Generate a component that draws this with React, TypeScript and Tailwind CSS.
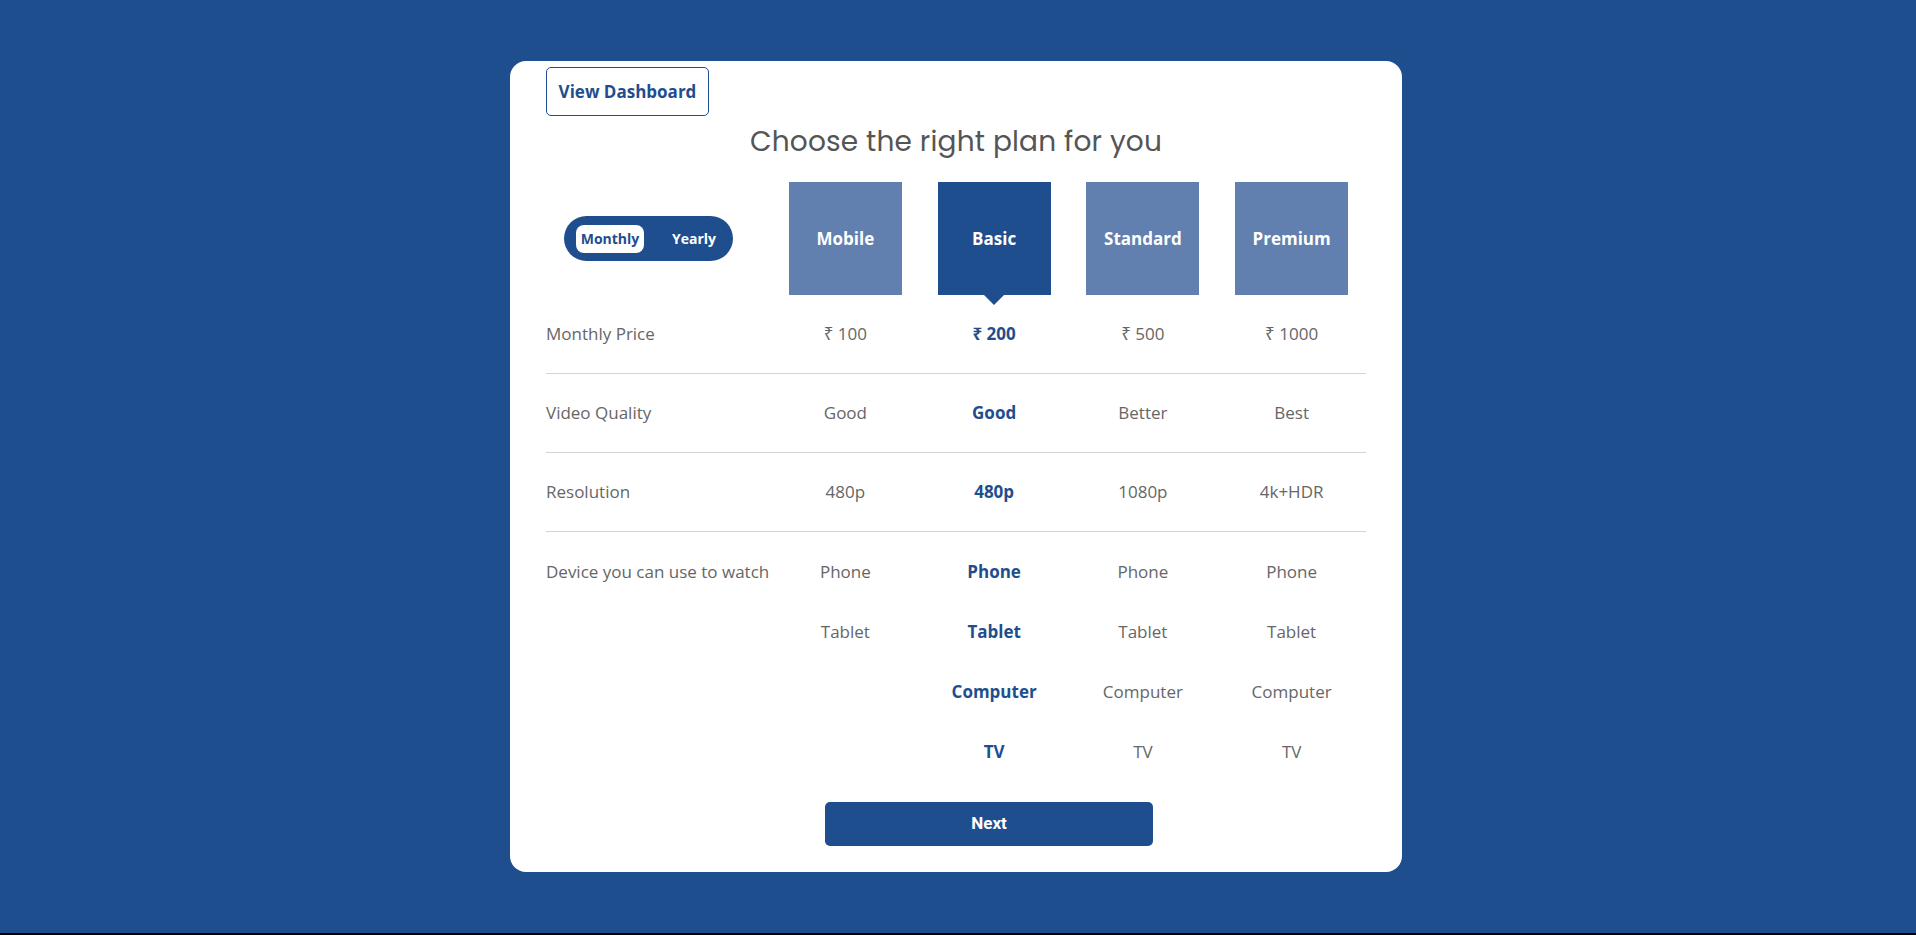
import React, { useState } from 'react';

type Plan = {
  name: string;
  price: string;
  quality: string;
  resolution: string;
  devices: string[];
};

const plans: Plan[] = [
  { name: 'Mobile', price: '₹ 100', quality: 'Good', resolution: '480p', devices: ['Phone', 'Tablet'] },
  { name: 'Basic', price: '₹ 200', quality: 'Good', resolution: '480p', devices: ['Phone', 'Tablet', 'Computer', 'TV'] },
  { name: 'Standard', price: '₹ 500', quality: 'Better', resolution: '1080p', devices: ['Phone', 'Tablet', 'Computer', 'TV'] },
  { name: 'Premium', price: '₹ 1000', quality: 'Best', resolution: '4k+HDR', devices: ['Phone', 'Tablet', 'Computer', 'TV'] },
];

const bodyFont = { fontFamily: '"Open Sans", "Noto Sans", sans-serif' };

export default function App() {
  const [selected, setSelected] = useState('Basic');
  const [yearly, setYearly] = useState(false);

  const cellClass = (name: string) =>
    name === selected ? 'text-[#1f4e8e] font-bold' : 'text-[#666666]';

  const rows: { label: string; key: 'price' | 'quality' | 'resolution' }[] = [
    { label: 'Monthly Price', key: 'price' },
    { label: 'Video Quality', key: 'quality' },
    { label: 'Resolution', key: 'resolution' },
  ];

  return (
    <div style={bodyFont}>
      <div className="h-[933px] bg-[#1f4e8e] flex items-center justify-center pr-[4px]">
        <div className="w-[892px] h-[811px] bg-white rounded-2xl px-9 pt-[6px]">
          {/* Header */}
          <button className="h-[49px] w-[163px] border border-[#1f4e8e] rounded-[5px] text-[#1f4e8e] font-bold text-[17px]">
            View Dashboard
          </button>
          <h1
            className="text-center text-[#555555] text-[28px] leading-[40px] mt-[6px] tracking-[0.2px]"
            style={{ fontFamily: 'Poppins, Inter, sans-serif' }}
          >
            Choose the right plan for you
          </h1>

          {/* Plan header row */}
          <div className="grid grid-cols-[225px_repeat(4,1fr)] mt-[20px]">
            <div className="flex items-center pl-[18px]">
              <div className="flex items-center h-[45px] w-[169px] rounded-full bg-[#1f4e8e] pl-[12px] pr-[5px] text-[14px] font-bold">
                <button
                  onClick={() => setYearly(false)}
                  className={`h-[28px] w-[68px] rounded-[8px] ${!yearly ? 'bg-white text-[#1f4e8e]' : 'text-white'}`}
                >
                  Monthly
                </button>
                <button
                  onClick={() => setYearly(true)}
                  className={`h-[28px] w-[68px] ml-auto rounded-[8px] ${yearly ? 'bg-white text-[#1f4e8e]' : 'text-white'}`}
                >
                  Yearly
                </button>
              </div>
            </div>
            {plans.map((p) => (
              <div key={p.name} className="flex justify-center">
                <button
                  onClick={() => setSelected(p.name)}
                  className={`relative w-[113px] h-[113px] flex items-center justify-center text-white font-bold text-[17px] ${
                    p.name === selected ? 'bg-[#1f4e8e]' : 'bg-[#6180b0]'
                  }`}
                >
                  {p.name}
                  {p.name === selected && (
                    <span className="absolute left-1/2 -translate-x-1/2 top-full w-0 h-0 border-l-[10px] border-r-[10px] border-t-[10px] border-l-transparent border-r-transparent border-t-[#1f4e8e]" />
                  )}
                </button>
              </div>
            ))}
          </div>

          {/* Feature rows */}
          {rows.map((r) => (
            <div
              key={r.label}
              className="grid grid-cols-[225px_repeat(4,1fr)] h-[79px] items-center border-b border-[#d4d4d4] text-[17px]"
            >
              <div className="text-[#666666]">{r.label}</div>
              {plans.map((p) => (
                <div key={p.name} className={`text-center ${cellClass(p.name)}`}>
                  {p[r.key]}
                </div>
              ))}
            </div>
          ))}

          <div className="grid grid-cols-[225px_repeat(4,1fr)] pt-[10px] text-[17px]">
            <div className="h-[60px] flex items-center text-[#666666] whitespace-nowrap">Device you can use to watch</div>
            {plans.map((p) => (
              <div key={p.name} className="flex flex-col">
                {p.devices.map((d) => (
                  <div key={d} className={`h-[60px] flex items-center justify-center ${cellClass(p.name)}`}>
                    {d}
                  </div>
                ))}
              </div>
            ))}
          </div>

          <div className="mt-[20px] pl-[279px]">
            <button
              className="w-[328px] h-[44px] rounded-[5px] bg-[#1f4e8e] text-white font-bold text-[17px]"
              style={{ fontFamily: 'Roboto, sans-serif' }}
            >
              Next
            </button>
          </div>
        </div>
      </div>
      <div className="h-[2px] bg-black" />
    </div>
  );
}
